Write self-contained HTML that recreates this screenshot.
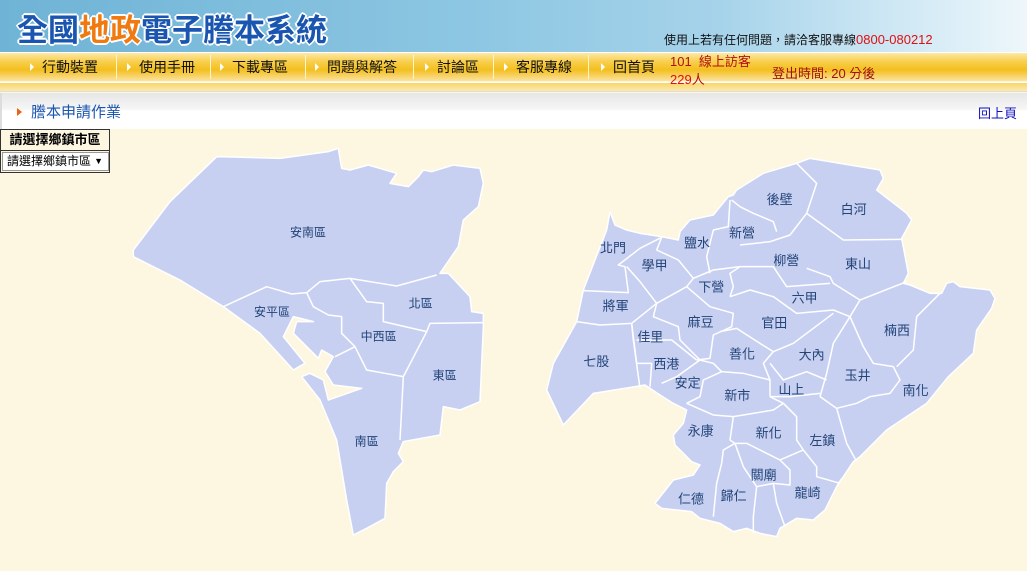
<!DOCTYPE html>
<html><head><meta charset="utf-8">
<style>
*{margin:0;padding:0;box-sizing:border-box}
body{width:1027px;height:571px;overflow:hidden;background:#fdf6e1;font-family:"Liberation Sans","Noto Sans CJK TC",sans-serif;position:relative}
#hdr{position:absolute;left:0;top:0;width:1027px;height:52px;background:linear-gradient(90deg,#6fb3d6 0%,#8cc6e2 45%,#a6d3ea 70%,#d5ebf6 90%,#eef7fb 100%)}
#title{position:absolute;left:17px;top:8px;font-size:31px;font-weight:bold;color:#1a55b0;font-family:"Noto Sans CJK TC",sans-serif;text-shadow:2px 0 0 #fff,-2px 0 0 #fff,0 2px 0 #fff,0 -2px 0 #fff,1px 1px 0 #fff,-1px -1px 0 #fff,1px -1px 0 #fff,-1px 1px 0 #fff;line-height:40px}
#title span{color:#f07a10}
#help{position:absolute;left:664px;top:31px;font-size:12px;color:#111}
#help b{font-weight:normal;color:#e01010;font-size:13px}
#nav{position:absolute;left:0;top:52px;width:1027px;height:29px;border-top:1px solid #fff;background:linear-gradient(#fde9a6 0%,#f8cf4e 30%,#f4bf1f 60%,#fbe3a0 100%)}
.it{position:absolute;top:4px;font-size:14px;color:#111;font-family:"Noto Sans CJK TC",sans-serif;line-height:20px}
.it:before{content:"";position:absolute;left:-12px;top:6px;border-left:4px solid #fff;border-top:4px solid transparent;border-bottom:4px solid transparent}
.sep{position:absolute;top:2px;width:1px;height:24px;background:#e0a010;border-right:1px solid #fff6d0}
#bar2{position:absolute;left:0;top:82px;width:1027px;height:10px;border-top:1px solid #fff;background:linear-gradient(#f9d56a,#fde9b0);border-bottom:1px solid #ddd}
#sub{position:absolute;left:0;top:93px;width:1027px;height:36px;background:linear-gradient(#e6e6e8 0%,#f6f6f6 45%,#fff 50%,#fff 100%);border-left:2px solid #ddd}
#sub .t{position:absolute;left:29px;top:8px;font-size:15px;color:#1a55b0}
#sub .a{position:absolute;left:15px;top:15px;border-left:5px solid #f06010;border-top:4px solid transparent;border-bottom:4px solid transparent}
#sub .r{position:absolute;right:10px;top:10px;font-size:13px;color:#1010c0}
#sel{position:absolute;left:0;top:129px;width:110px;height:44px;border:1px solid #333;background:#fdf6e1}
#sel .h{height:21px;text-align:center;font-size:13px;font-weight:bold;line-height:20px;border-bottom:1px solid #333}
#sel .s{position:absolute;left:1px;top:22px;width:107px;height:19px;background:#fff;border:1px solid #999;font-size:12px;line-height:17px;padding-left:4px}
#sel .s i{position:absolute;right:5px;top:0;font-style:normal;font-size:9px}
#info{position:absolute;left:670px;top:53px;z-index:5}
svg text{font-family:"Liberation Sans","Noto Sans CJK TC",sans-serif;fill:#224477;stroke:none}
</style></head><body>
<div id="hdr"><div id="title">全國<span>地政</span>電子謄本系統</div>
<div id="help">使用上若有任何問題，請洽客服專線<b>0800-080212</b></div></div>
<div id="nav">
<div class="it" style="left:42px">行動裝置</div><div class="sep" style="left:116px"></div>
<div class="it" style="left:139px">使用手冊</div><div class="sep" style="left:210px"></div>
<div class="it" style="left:232px">下載專區</div><div class="sep" style="left:305px"></div>
<div class="it" style="left:327px">問題與解答</div><div class="sep" style="left:413px"></div>
<div class="it" style="left:437px">討論區</div><div class="sep" style="left:493px"></div>
<div class="it" style="left:516px">客服專線</div><div class="sep" style="left:588px"></div>
<div class="it" style="left:613px">回首頁</div>
<div style="position:absolute;left:772px;top:10px;font-size:13px;color:#a01010">登出時間: 20 分後</div>
</div>
<div id="bar2"></div>
<div id="info">
<div style="position:absolute;left:0;top:0;font-size:13px;color:#b01010;line-height:17px;white-space:nowrap">101 &nbsp;線上訪客</div>
<div style="position:absolute;left:0;top:18px;font-size:13px;color:#e01010;line-height:17px;white-space:nowrap">229<span style="color:#b01010">人</span></div>
</div>
<div id="sub"><div class="a"></div><div class="t">謄本申請作業</div><div class="r">回上頁</div></div>
<div id="sel"><div class="h">請選擇鄉鎮市區</div><div class="s">請選擇鄉鎮市區<i>▼</i></div></div>

<svg width="1027" height="571" style="position:absolute;left:0;top:0">
<g transform="translate(120,140) scale(0.33333)" fill="#c8d0f2" stroke="#fff" stroke-width="4.5" stroke-linejoin="round">
<path d="M40,330 L150,185 L290,50 L480,55 L625,35 L655,25 L665,85 L690,90 L745,75 L830,100 L810,130 L865,140 L895,110 L910,90 L935,95 L1000,75 L1080,85 L1090,130 L1075,200 L1030,240 L1015,320 L960,400 L985,400 L1050,470 L1055,515 L1090,520 L1090,560 L1080,785 L1020,810 L970,800 L960,885 L850,905 L835,940 L850,965 L820,995 L800,1030 L795,1135 L740,1165 L700,1185 L680,1080 L650,900 L600,780 L545,710 L570,700 L610,720 L625,780 L725,745 L640,735 L615,695 L640,650 L605,630 L595,655 L520,580 L530,545 L580,545 L520,530 L490,590 L555,670 L520,690 L420,580 L310,500 L180,420 L40,350 Z"/>
<g fill="none">
<polyline points="310,500 440,440 515,462 560,458 600,425 690,415 830,438 950,405"/>
<polyline points="560,458 580,500 625,525 665,530 665,580 705,620 645,650"/>
<polyline points="690,415 740,485 790,490 790,545 920,575"/>
<polyline points="920,575 930,550 1090,548"/>
<polyline points="920,575 850,710 840,900"/>
<polyline points="705,620 740,690 850,710"/>
</g>
<g font-size="36">
<text x="510" y="290">安南區</text>
<text x="402" y="528">安平區</text>
<text x="866" y="502">北區</text>
<text x="722" y="602">中西區</text>
<text x="938" y="718">東區</text>
<text x="704" y="916">南區</text>
</g>
</g>
<g transform="translate(540,150) scale(0.33333)" fill="#c8d0f2" stroke="#fff" stroke-width="4.5" stroke-linejoin="round">
<path d="M70,825 L20,720 L40,640 L110,515 L130,420 L200,240 L210,185 L225,225 L260,240 L300,250 L365,260 L415,270 L420,245 L450,210 L520,195 L565,140 L580,135 L590,120 L670,70 L770,40 L810,25 L1020,60 L1030,85 L1010,120 L1100,190 L1115,210 L1085,265 L1105,370 L1090,400 L1110,405 L1170,430 L1205,430 L1220,400 L1240,395 L1260,410 L1350,420 L1365,445 L1355,475 L1310,540 L1300,610 L1225,680 L1160,760 L1040,840 L960,920 L940,935 L910,980 L895,1000 L855,1080 L820,1110 L770,1105 L720,1135 L710,1160 L660,1150 L620,1135 L580,1145 L540,1120 L480,1105 L455,1085 L365,1075 L345,1060 L400,990 L460,975 L480,945 L455,935 L405,885 L400,855 L430,820 L440,780 L400,760 L360,735 L315,705 L160,730 Z"/>
<g fill="none">
<polyline points="130,422 265,428 255,350 235,345 300,295 365,262"/>
<polyline points="365,262 350,300 415,330 460,385"/>
<polyline points="260,350 300,395 350,460 440,410 460,385 520,360 600,350"/>
<polyline points="110,515 180,525 275,520 350,460"/>
<polyline points="275,520 280,570 300,715"/>
<polyline points="275,520 290,640 335,640 330,710"/>
<polyline points="350,460 340,500 415,530 420,570 480,630"/>
<polyline points="290,570 395,570 470,630"/>
<polyline points="365,700 410,680 480,630 520,640 545,665 490,690 480,740 440,760"/>
<polyline points="440,410 510,470 580,490 575,530 520,555 510,625 470,630"/>
<polyline points="600,350 570,370 580,410 570,440"/>
<polyline points="600,350 700,350 740,410 870,400"/>
<polyline points="510,370 500,320 520,240 565,230 570,150"/>
<polyline points="575,150 600,170 640,190 700,215 710,245"/>
<polyline points="600,285 690,275 750,255 800,190"/>
<polyline points="770,40 830,100 800,190 910,270 1085,268"/>
<polyline points="800,355 870,380 880,400 960,450 1100,395"/>
<polyline points="570,440 630,420 700,440 770,490 880,480 930,500 960,450"/>
<polyline points="540,545 590,535 660,580 700,605 760,580 880,490"/>
<polyline points="700,605 670,640 690,690 690,740"/>
<polyline points="545,665 610,670 690,690"/>
<polyline points="930,500 880,580 860,670 840,740"/>
<polyline points="690,740 750,740 840,730"/>
<polyline points="690,640 730,690 800,665 860,690"/>
<polyline points="930,500 970,590 1000,640 1060,650 1080,690 1050,730 990,740 950,760 890,775 840,740"/>
<polyline points="1070,650 1120,600 1130,500 1200,430"/>
<polyline points="890,775 920,880 950,935"/>
<polyline points="440,760 520,795 580,800 700,780 730,760 690,740"/>
<polyline points="580,800 570,870 585,880"/>
<polyline points="545,940 550,900 585,880 620,880 660,900 720,930 790,900"/>
<polyline points="730,760 770,800 770,870 790,900 830,950 830,980 900,1000"/>
<polyline points="585,880 610,950 650,1010 700,1000 750,1005 750,960 720,930"/>
<polyline points="545,940 530,1000 520,1100"/>
<polyline points="650,1010 640,1100 640,1150"/>
<polyline points="700,1000 710,1060 735,1130"/>
</g>
<g font-size="39">
<text x="680" y="162">後壁</text>
<text x="902" y="192">白河</text>
<text x="567" y="262">新營</text>
<text x="432" y="292">鹽水</text>
<text x="180" y="308">北門</text>
<text x="305" y="360">學甲</text>
<text x="700" y="345">柳營</text>
<text x="915" y="355">東山</text>
<text x="475" y="425">下營</text>
<text x="755" y="458">六甲</text>
<text x="188" y="482">將軍</text>
<text x="443" y="530">麻豆</text>
<text x="664" y="533">官田</text>
<text x="1032" y="555">楠西</text>
<text x="292" y="575">佳里</text>
<text x="567" y="625">善化</text>
<text x="776" y="628">大內</text>
<text x="130" y="648">七股</text>
<text x="340" y="655">西港</text>
<text x="914" y="690">玉井</text>
<text x="404" y="712">安定</text>
<text x="715" y="732">山上</text>
<text x="1088" y="735">南化</text>
<text x="553" y="750">新市</text>
<text x="443" y="857">永康</text>
<text x="647" y="862">新化</text>
<text x="808" y="885">左鎮</text>
<text x="632" y="988">關廟</text>
<text x="764" y="1043">龍崎</text>
<text x="542" y="1052">歸仁</text>
<text x="414" y="1060">仁德</text>
</g>
</g>
</svg>
</body></html>
